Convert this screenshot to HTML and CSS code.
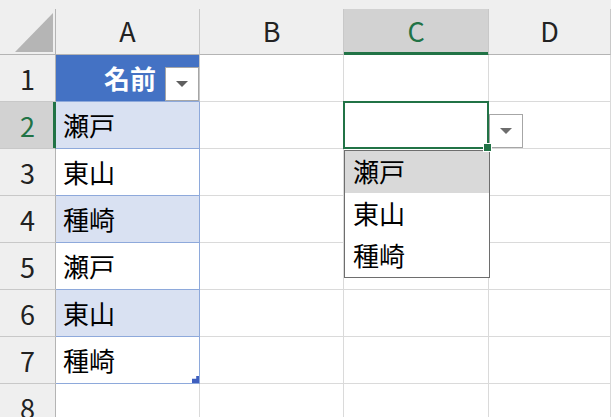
FILE: index.html
```html
<!DOCTYPE html>
<html lang="ja">

<head>
    <meta charset="UTF-8">
    <title>入力規則リスト</title>
    <link rel="stylesheet" href="styles.css">
</head>

<body>
    <div class="sheet">
        <!-- column headers -->
        <div class="corner"><span class="corner-tri"></span></div>
        <div class="colhead">A</div>
        <div class="colhead">B</div>
        <div class="colhead selected">C</div>
        <div class="colhead">D</div>

        <!-- row 1 -->
        <div class="rowhead">1</div>
        <div class="cell tbl tbl-head">名前<span class="filter-btn"><span class="arrow"></span></span></div>
        <div class="cell"></div>
        <div class="cell"></div>
        <div class="cell"></div>

        <!-- row 2 -->
        <div class="rowhead selected">2</div>
        <div class="cell tbl band">瀬戸</div>
        <div class="cell"></div>
        <div class="cell active">
            <ul class="dropdown">
                <li class="hover">瀬戸</li>
                <li>東山</li>
                <li>種崎</li>
            </ul>
            <span class="dropdown-btn"><span class="arrow"></span></span>
            <span class="selection"><span class="fill-handle"></span></span>
        </div>
        <div class="cell"></div>

        <!-- row 3 -->
        <div class="rowhead">3</div>
        <div class="cell tbl">東山</div>
        <div class="cell"></div>
        <div class="cell"></div>
        <div class="cell"></div>

        <!-- row 4 -->
        <div class="rowhead">4</div>
        <div class="cell tbl band">種崎</div>
        <div class="cell"></div>
        <div class="cell"></div>
        <div class="cell"></div>

        <!-- row 5 -->
        <div class="rowhead">5</div>
        <div class="cell tbl">瀬戸</div>
        <div class="cell"></div>
        <div class="cell"></div>
        <div class="cell"></div>

        <!-- row 6 -->
        <div class="rowhead">6</div>
        <div class="cell tbl band">東山</div>
        <div class="cell"></div>
        <div class="cell"></div>
        <div class="cell"></div>

        <!-- row 7 -->
        <div class="rowhead">7</div>
        <div class="cell tbl tbl-last">種崎<span class="resize-handle"></span></div>
        <div class="cell"></div>
        <div class="cell"></div>
        <div class="cell"></div>

        <!-- row 8 -->
        <div class="rowhead">8</div>
        <div class="cell"></div>
        <div class="cell"></div>
        <div class="cell"></div>
        <div class="cell"></div>
    </div>
</body>

</html>
```

FILE: styles.css
```css
* {
    box-sizing: border-box;
}

html,
body {
    margin: 0;
    height: 100%;
    overflow: hidden;
}

body {
    background-color: #efefef;
    /* header grey */
    font-family: 'Noto Sans CJK JP', 'Noto Sans', sans-serif;
    color: #000;
    padding-top: 9px;
}

.sheet {
    display: grid;
    grid-template-columns: 56px 144px 144px 145px 122px;
    grid-template-rows: 46px repeat(8, 47px);
}

/* headers */
.corner {
    display: flex;
    justify-content: flex-end;
    align-items: flex-end;
    padding: 0 2px 2px 0;
    border-right: 1px solid #b4b4b4;
    border-bottom: 1px solid #b4b4b4;
}

.corner-tri {
    width: 38px;
    height: 39px;
    background-color: #b5b5b5;
    clip-path: polygon(100% 0, 100% 100%, 0 100%);
}

.colhead {
    display: flex;
    align-items: center;
    justify-content: center;
    font-size: 27px;
    line-height: 1;
    color: #222;
    border-right: 1px solid #c8c8c8;
    border-bottom: 1px solid #b4b4b4;
    padding-bottom: 2px;
}

.colhead.selected {
    background-color: #d2d2d2;
    color: #217346;
    border-bottom-color: #217346;
    box-shadow: inset 0 -2px 0 #217346;
}

.rowhead {
    display: flex;
    align-items: center;
    justify-content: center;
    font-size: 27px;
    line-height: 1;
    color: #222;
    border-right: 1px solid #b4b4b4;
    border-bottom: 1px solid #c8c8c8;
}

.rowhead.selected {
    background-color: #d2d2d2;
    color: #217346;
    border-right-color: #217346;
    box-shadow: inset -2px 0 0 #217346;
}

/* cells */
.cell {
    position: relative;
    display: flex;
    align-items: center;
    padding: 0 0 1px 7px;
    font-size: 26px;
    line-height: 1;
    background-color: #fff;
    border-right: 1px solid #dadada;
    border-bottom: 1px solid #dadada;
}

.tbl {
    border-right-color: #8ea9db;
    border-bottom-color: #8ea9db;
}

.band {
    background-color: #d9e1f2;
}

.tbl-head {
    justify-content: flex-end;
    padding-right: 0;
    background-color: #4472c4;
    color: #fff;
    font-weight: bold;
    border-right-color: #c8c8c8;
    gap: 9px;
}

.filter-btn,
.dropdown-btn {
    display: flex;
    align-items: center;
    justify-content: center;
    width: 34px;
    height: 34px;
    background-color: #fff;
    border: 1px solid #a6a6a6;
}

.filter-btn {
    align-self: flex-end;
    margin-bottom: -1px;
}

.arrow {
    width: 0;
    height: 0;
    border-left: 6px solid transparent;
    border-right: 6px solid transparent;
    border-top: 6px solid #5f5f5f;
}

.resize-handle {
    position: absolute;
    right: 0;
    bottom: 0;
    width: 7px;
    height: 7px;
    background-color: #3f5fbf;
    clip-path: polygon(100% 0, 100% 100%, 0 100%, 0 40%, 60% 40%, 60% 0);
}

/* active cell and its list */
.selection {
    position: absolute;
    left: -1px;
    top: -1px;
    right: -1px;
    bottom: -1px;
    border: 2px solid #217346;
    z-index: 3;
}

.fill-handle {
    position: absolute;
    right: -4px;
    bottom: -4px;
    width: 7px;
    height: 7px;
    background-color: #217346;
    outline: 1px solid #fff;
}

.dropdown-btn {
    position: absolute;
    left: 145px;
    top: 12px;
    z-index: 2;
}

.dropdown-btn .arrow {
    border-top-color: #6d6d6d;
}

.dropdown {
    position: absolute;
    left: 0;
    top: 48px;
    width: 146px;
    margin: 0;
    padding: 0;
    list-style: none;
    background-color: #fff;
    border: 1px solid #6e6e6e;
    z-index: 2;
}

.dropdown li {
    display: flex;
    align-items: center;
    height: 42px;
    padding: 0 0 2px 8px;
    font-size: 26px;
    line-height: 1;
}

.dropdown li.hover {
    background-color: #d9d9d9;
}
```
